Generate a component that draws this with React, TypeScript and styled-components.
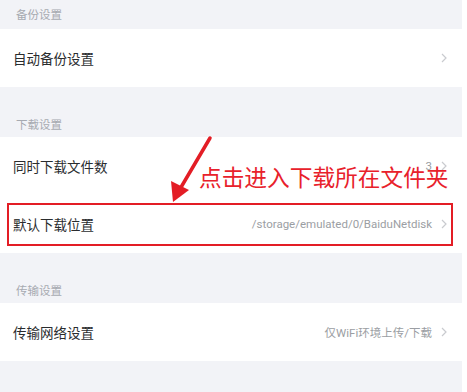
import styled, { createGlobalStyle } from "styled-components";

const GlobalStyle = createGlobalStyle`
  html, body {
    margin: 0;
    padding: 0;
    background: #ffffff;
  }
`;

const Page = styled.div`
  width: 462px;
  height: 392px;
  background: #f2f3f7;
  font-family: "Roboto", "Noto Sans CJK SC", sans-serif;
  overflow: hidden;
`;

const Section = styled.section`
  position: relative;
`;

const SectionHeader = styled.div<{ $short?: boolean }>`
  height: ${p => (p.$short ? 29 : 50)}px;
  display: flex;
  align-items: flex-end;
  padding: 0 0 ${p => (p.$short ? 2 : 0)}px 16px;
  box-sizing: border-box;
  font-family: "Noto Sans CJK SC", sans-serif;
  font-size: 11.5px;
  line-height: 26px;
  color: #a7aab1;
`;

const Row = styled.div<{ $marked?: boolean }>`
  position: relative;
  height: 58px;
  display: flex;
  align-items: center;
  padding: 0 15px 0 13px;
  background: #ffffff;

  ${p => p.$marked && `
    &::after {
      content: "";
      position: absolute;
      left: 7px;
      right: 9px;
      top: 8px;
      bottom: 7px;
      border: 2px solid #e31d25;
    }
  `}
`;

const Title = styled.span`
  font-family: "Noto Sans CJK SC", sans-serif;
  font-size: 13.5px;
  color: #2a2c2e;
`;

const Value = styled.span`
  margin-left: auto;
  font-size: 11.5px;
  color: #9b9ea3;
`;

const Chevron = styled.svg`
  margin-left: 9px;
  flex: none;
`;

const Arrow = styled.svg`
  position: absolute;
  left: 160px;
  top: 45px;
`;

const Note = styled.div`
  position: absolute;
  left: 199px;
  top: 76px;
  font-family: "Noto Sans CJK SC", sans-serif;
  font-size: 22.7px;
  line-height: 27px;
  color: #e8212b;
  white-space: nowrap;
`;

const ChevronIcon = () => (
  <Chevron width="6" height="10" viewBox="0 0 6 10">
    <path d="M1 1l4 4-4 4" fill="none" stroke="#c9cbcf" strokeWidth="1.2" />
  </Chevron>
);

interface ISettingRow {
  title: string;
  value?: string;
  marked?: boolean;
}

const SettingRow = ({ title, value, marked }: ISettingRow) => (
  <Row $marked={marked}>
    <Title>{title}</Title>
    <Value>{value}</Value>
    <ChevronIcon />
  </Row>
);

const App = () => (
  <>
    <GlobalStyle />
    <Page>
      <Section>
        <SectionHeader $short>备份设置</SectionHeader>
        <SettingRow title="自动备份设置" />
      </Section>

      <Section>
        <SectionHeader>下载设置</SectionHeader>
        <SettingRow title="同时下载文件数" value="3" />
        <SettingRow title="默认下载位置" value="/storage/emulated/0/BaiduNetdisk" marked />

        <Arrow width="60" height="75" viewBox="0 0 60 75">
          <line x1="50" y1="6" x2="20" y2="57" stroke="#e31d25" strokeWidth="3.5" strokeLinecap="round" />
          <polygon points="13,70 11,49 29,58" fill="#e31d25" />
        </Arrow>
        <Note>点击进入下载所在文件夹</Note>
      </Section>

      <Section>
        <SectionHeader>传输设置</SectionHeader>
        <SettingRow title="传输网络设置" value="仅WiFi环境上传/下载" />
      </Section>
    </Page>
  </>
);

export default App;
